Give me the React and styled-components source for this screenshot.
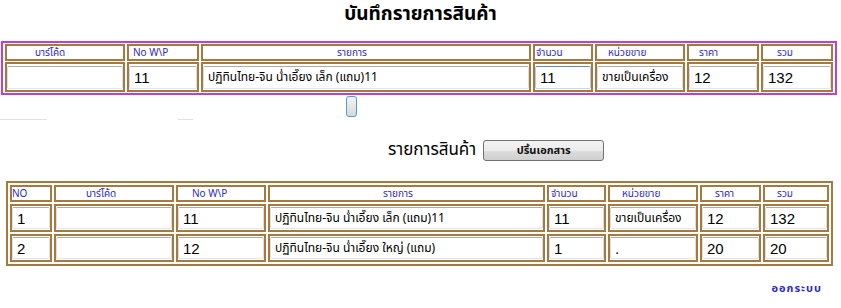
import React from "react";
import styled, { createGlobalStyle } from "styled-components";

const Global = createGlobalStyle`
  * { box-sizing: border-box; }
  html, body { margin: 0; padding: 0; background: #ffffff; }
  body { font-family: Tahoma, "Noto Sans Thai", "Noto Sans", "Liberation Sans", sans-serif; color: #000; }
`;

const Page = styled.div`
  width: 841px;
  height: 308px;
  overflow: hidden;
  display: flex;
  flex-direction: column;
`;

const Title = styled.h1`
  margin: 0;
  height: 41px;
  padding-top: 3px;
  text-align: center;
  font-size: 19px;
  font-weight: bold;
  line-height: 24px;
`;

const Table = styled.table`
  table-layout: fixed;
  border-collapse: separate;
  border-spacing: ${(p) => p.$spacing};
  border: 2px solid ${(p) => p.$frame};
  width: ${(p) => p.$width}px;
  margin-left: ${(p) => p.$left}px;
  margin-top: ${(p) => p.$top || 0}px;
`;

const HeadCell = styled.td`
  border: 2px solid #a67a3f;
  height: 17px;
  padding: 0 0 0 ${(p) => p.$indent}px;
  font-size: 10px;
  line-height: 12px;
  color: #2a2acb;
  white-space: nowrap;
  overflow: hidden;
  vertical-align: middle;
`;

const DataCell = styled.td`
  border: 2px solid #a67a3f;
  height: ${(p) => p.$h}px;
  padding: 0;
  vertical-align: middle;
`;

const Field = styled.input`
  display: block;
  width: 100%;
  height: ${(p) => p.$h}px;
  margin: 0;
  padding: 0 4px;
  border: 1px solid;
  border-color: ${(p) => (p.$focus ? "#5d8ec2 #b6cde6 #c5d8ec #b6cde6" : "#a9abb2 #dadde3 #e3e7ed #dadde3")};
  border-radius: 2px;
  background: #fff;
  font-family: "Liberation Sans", Arial, sans-serif;
  font-size: 15px;
  color: #000;
  outline: none;
`;

const ThaiField = styled(Field)`
  font-family: Tahoma, "Noto Sans Thai", "Liberation Sans", sans-serif;
  font-size: 12px;
`;

const MidRow = styled.div`
  height: 24px;
  display: flex;
  align-items: flex-start;
  padding-left: 346px;
  padding-top: 1px;
`;

const Knob = styled.span`
  display: block;
  width: 11px;
  height: 21px;
  border: 1px solid #4aa0cf;
  border-radius: 3px;
  background: linear-gradient(#f4f4f4, #d8d8d8);
`;

const Ruler = styled.div`
  height: 1px;
  display: flex;
`;

const Seg = styled.span`
  display: block;
  height: 1px;
  width: ${(p) => p.$w}px;
  margin-left: ${(p) => p.$gap}px;
  background: #e2e2e2;
`;

const Toolbar = styled.div`
  display: flex;
  align-items: center;
  gap: 7px;
  padding-left: 388px;
  margin-top: 19px;
  height: 22px;
`;

const Caption = styled.span`
  font-size: 17px;
  line-height: 22px;
`;

const PrintButton = styled.button`
  width: 121px;
  height: 21px;
  border: 1px solid #707070;
  border-radius: 3px;
  background: linear-gradient(#f3f3f3 0%, #ebebeb 50%, #dddddd 51%, #cfcfcf 100%);
  font-family: Tahoma, "Noto Sans Thai", sans-serif;
  font-size: 11px;
  font-weight: bold;
  color: #111;
  padding: 0;
`;

const Footer = styled.div`
  display: flex;
  justify-content: flex-end;
  padding-right: 19px;
  margin-top: 14px;
`;

const Logout = styled.a`
  font-size: 11px;
  font-weight: bold;
  color: #2a2acb;
  text-decoration: none;
  letter-spacing: 1px;
`;

const topCols = [
  { w: 120, label: "บาร์โค้ด", indent: 28 },
  { w: 72, label: "No W\\P", indent: 4 },
  { w: 330, label: "รายการ", indent: 134 },
  { w: 60, label: "จำนวน", indent: 1 },
  { w: 90, label: "หน่วยขาย", indent: 11 },
  { w: 72, label: "ราคา", indent: 10 },
  { w: 72, label: "รวม", indent: 14 },
];

const topRow = ["", "11", "ปฏิทินไทย-จิน น่ำเอี๊ยง เล็ก (แถม)11", "11", "ขายเป็นเครื่อง", "12", "132"];

const botCols = [
  { w: 42, label: "NO", indent: 0 },
  { w: 120, label: "บาร์โค้ด", indent: 30 },
  { w: 90, label: "No W\\P", indent: 14 },
  { w: 277, label: "รายการ", indent: 113 },
  { w: 59, label: "จำนวน", indent: 2 },
  { w: 90, label: "หน่วยขาย", indent: 12 },
  { w: 61, label: "ราคา", indent: 13 },
  { w: 66, label: "รวม", indent: 12 },
];

const botRows = [
  ["1", "", "11", "ปฏิทินไทย-จิน น่ำเอี๊ยง เล็ก (แถม)11", "11", "ขายเป็นเครื่อง", "12", "132"],
  ["2", "", "12", "ปฏิทินไทย-จิน น่ำเอี๊ยง ใหญ่ (แถม)", "1", ".", "20", "20"],
];

const isThai = (v) => /[\u0E00-\u0E7F]/.test(v);

function Cell({ value, h, fh, focus }) {
  const Comp = isThai(value) ? ThaiField : Field;
  return (
    <DataCell $h={h}>
      <Comp $h={fh} $focus={focus} defaultValue={value} readOnly />
    </DataCell>
  );
}

export default function App() {
  return (
    <Page>
      <Global />
      <Title>บันทึกรายการสินค้า</Title>
      <Table $frame="#c43fc6" $width={836} $left={1} $spacing="2px 1px">
        <colgroup>
          {topCols.map((c, i) => (
            <col key={i} style={{ width: c.w }} />
          ))}
        </colgroup>
        <tbody>
          <tr>
            {topCols.map((c, i) => (
              <HeadCell key={i} $indent={c.indent}>{c.label}</HeadCell>
            ))}
          </tr>
          <tr>
            {topRow.map((v, i) => (
              <Cell key={i} value={v} h={30} fh={23} focus={i === 3} />
            ))}
          </tr>
        </tbody>
      </Table>
      <MidRow>
        <Knob />
      </MidRow>
      <Ruler>
        <Seg $w={47} $gap={0} />
        <Seg $w={15} $gap={131} />
      </Ruler>
      <Toolbar>
        <Caption>รายการสินค้า</Caption>
        <PrintButton>ปริ้นเอกสาร</PrintButton>
      </Toolbar>
      <Table $frame="#a67a3f" $width={827} $left={6} $spacing="2px" $top={20}>
        <colgroup>
          {botCols.map((c, i) => (
            <col key={i} style={{ width: c.w }} />
          ))}
        </colgroup>
        <tbody>
          <tr>
            {botCols.map((c, i) => (
              <HeadCell key={i} $indent={c.indent}>{c.label}</HeadCell>
            ))}
          </tr>
          {botRows.map((r, ri) => (
            <tr key={ri}>
              {r.map((v, i) => (
                <Cell key={i} value={v} h={28} fh={22} />
              ))}
            </tr>
          ))}
        </tbody>
      </Table>
      <Footer>
        <Logout href="#">ออกระบบ</Logout>
      </Footer>
    </Page>
  );
}
